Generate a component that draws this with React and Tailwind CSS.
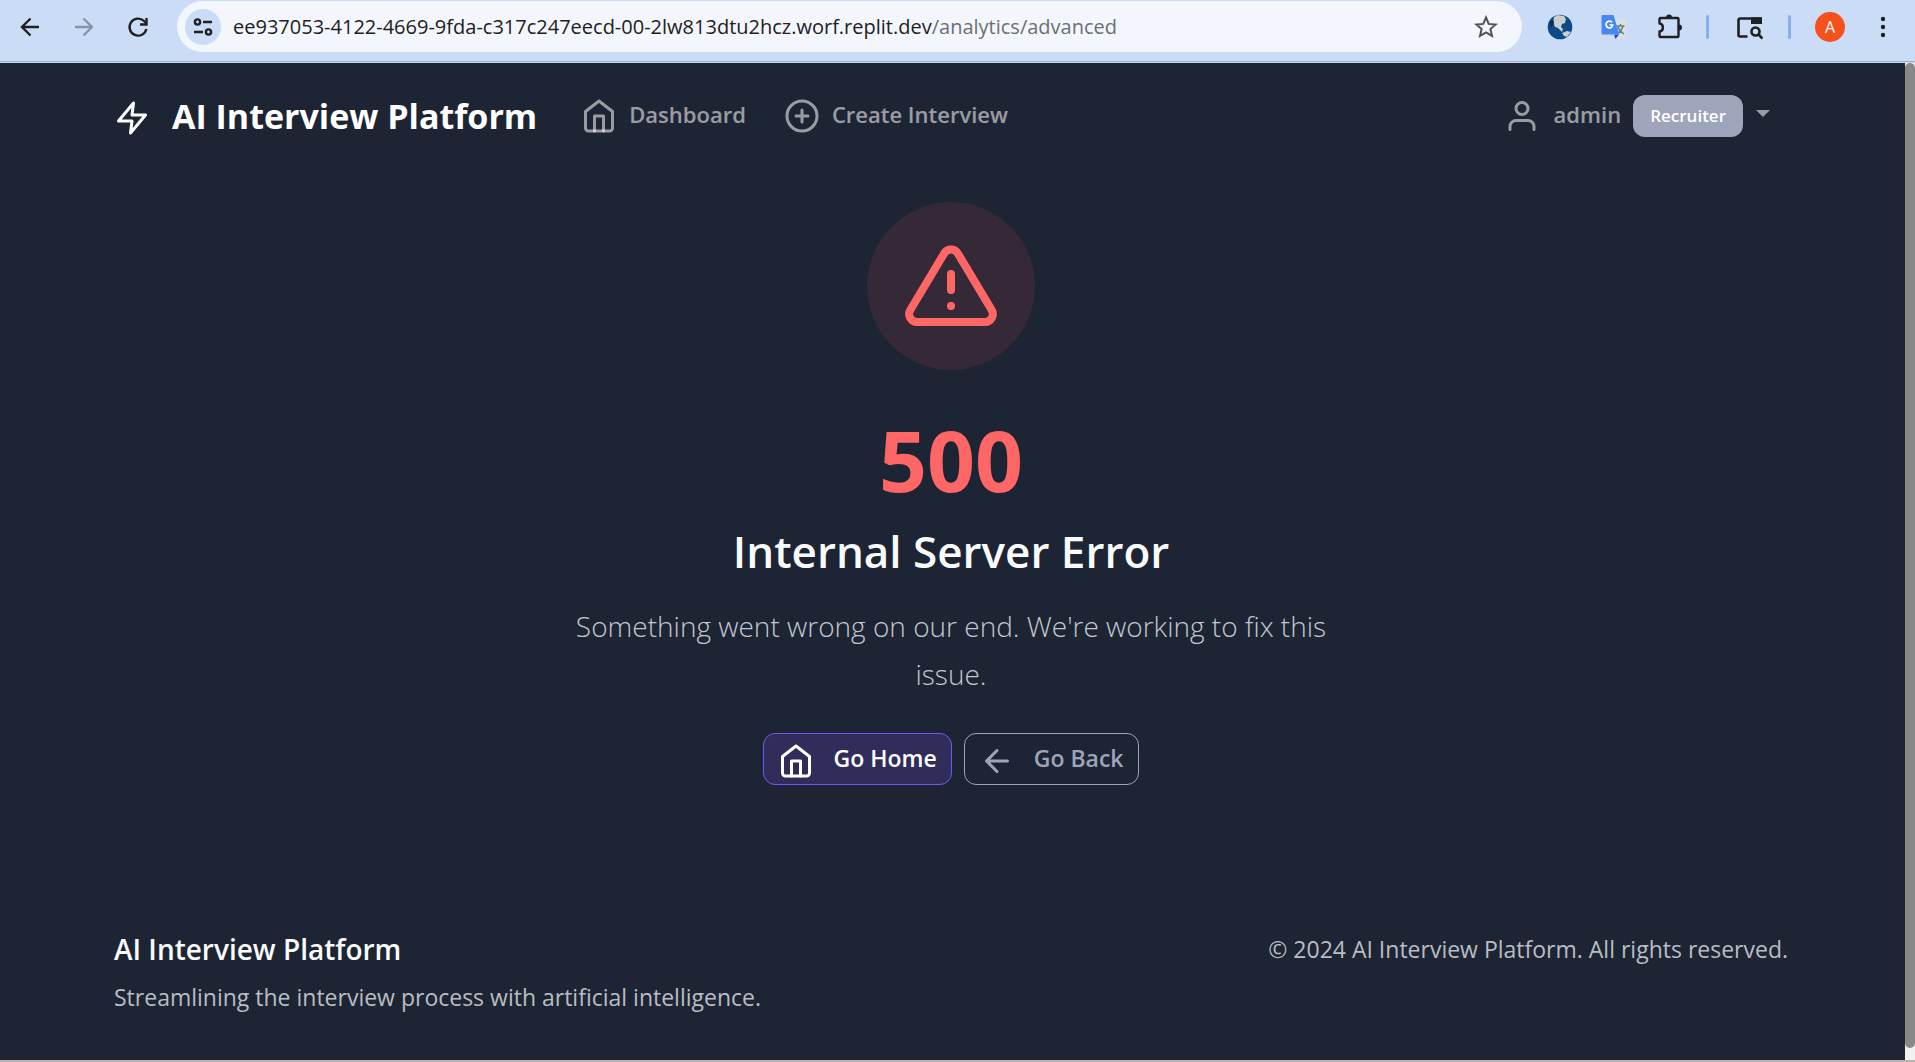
import React from "react";

function Feather({ className = "size-9 shrink-0", children }) {
  return (
    <svg
      className={className}
      viewBox="0 0 24 24"
      fill="none"
      stroke="currentColor"
      strokeWidth="2"
      strokeLinecap="round"
      strokeLinejoin="round"
      aria-hidden="true"
    >
      {children}
    </svg>
  );
}

function HomeIcon({ className = "size-9 shrink-0" }) {
  return (
    <Feather className={className}>
      <path d="M3 9l9-7 9 7v11a2 2 0 0 1-2 2H5a2 2 0 0 1-2-2z" />
      <polyline points="9 22 9 12 15 12 15 22" />
    </Feather>
  );
}

function ToolButton({ label, className = "", children }) {
  return (
    <button type="button" aria-label={label} className={`flex size-9 shrink-0 items-center justify-center ${className}`}>
      {children}
    </button>
  );
}

function BrowserBar() {
  return (
    <header className="flex h-[63px] shrink-0 items-start border-b border-[#c9d9f2] bg-[#cbdcf6] pt-px text-[#1f2023] shadow-[inset_0_-1px_0_#9db0d2]">
      <div className="flex h-[51px] items-center gap-[18px] pl-3">
        <ToolButton label="Back">
          <svg className="size-6" viewBox="0 0 24 24" fill="none" stroke="currentColor" strokeWidth="2.4">
            <path d="M21 12H4.500M12.500 3.500L4 12l8.500 8.500" />
          </svg>
        </ToolButton>
        <ToolButton label="Forward" className="text-[#8a94a8]">
          <svg className="size-6" viewBox="0 0 24 24" fill="none" stroke="currentColor" strokeWidth="2.4">
            <path d="M3 12h16.500M11.500 3.500L20 12l-8.500 8.500" />
          </svg>
        </ToolButton>
        <ToolButton label="Reload">
          <svg className="size-6" viewBox="0 0 24 24" fill="none" stroke="currentColor" strokeWidth="2.4">
            <path d="M20.400 14A8.500 8.500 0 1 1 18 6l2.500 2.500" />
            <path d="M20.500 3v6.500H14" />
          </svg>
        </ToolButton>
      </div>
      <div className="ml-[21px] flex h-[51px] min-w-0 flex-1 items-center rounded-full bg-[#f3f7fd] pl-2 pr-[18px]">
        <button
          type="button"
          aria-label="View site information"
          className="flex size-9 shrink-0 items-center justify-center rounded-full bg-[#cbdcf6]"
        >
          <svg className="size-6" viewBox="0 0 24 24" fill="none" stroke="currentColor" strokeWidth="2.4">
            <circle cx="6.500" cy="7" r="2.600" />
            <path d="M12 7h9M3 17h9" />
            <circle cx="17.500" cy="17" r="2.600" />
          </svg>
        </button>
        <p className="ml-3 flex-1 truncate text-xl leading-8">
          ee937053-4122-4669-9fda-c317c247eecd-00-2lw813dtu2hcz.worf.replit.dev
          <span className="text-[#6c6f75]">/analytics/advanced</span>
        </p>
        <ToolButton label="Bookmark this page" className="text-[#505358]">
          <svg className="size-6" viewBox="0 0 24 24" fill="none" stroke="currentColor" strokeWidth="2">
            <path d="M12 2.500l2.700 6.400 6.900.6-5.200 4.600 1.600 6.800L12 17.300l-6 3.600 1.600-6.800-5.200-4.600 6.900-.6z" />
          </svg>
        </ToolButton>
      </div>
      <div className="flex h-[51px] shrink-0 items-center pl-5 pr-[14px]">
        <ToolButton label="Globe extension">
          <svg className="size-[26px]" viewBox="0 0 26 26">
            <circle cx="13" cy="13" r="12.300" fill="#0b4a86" />
            <path d="M7 3l4-2 6 1 2 3-1 4-3 1-1 3 2 2-1 3-4-4-3-1-2-5z" fill="#c9cdd1" />
            <path d="M15 19l5-2 4 1-4 5-3-1z" fill="#c9cdd1" />
            <path d="M3 8l3-3 1 4-3 5z" fill="#0a2f57" />
          </svg>
        </ToolButton>
        <ToolButton label="Google Translate" className="ml-[18px]">
          <svg className="size-[26px]" viewBox="0 0 26 26">
            <path d="M10 5h14a1 1 0 0 1 1 1v18a1 1 0 0 1-1 1h-9z" fill="#dde0e3" />
            <path d="M15.500 12h8M19.500 10v2M22 12c-1 4-3 6-6 8M17 13c1 3 3 5 6 7" stroke="#5f7f8c" strokeWidth="1.400" fill="none" />
            <path d="M13 20.500h5L14.500 25z" fill="#3740b5" />
            <path d="M1 1h11.500l6 19.500H2A1.500 1.500 0 0 1 .5 19V2A1 1 0 0 1 1 1z" fill="#4688f1" />
            <path d="M11 8.300A3.400 3.400 0 1 0 11.800 11H8.500" stroke="#fff" strokeWidth="1.700" fill="none" />
          </svg>
        </ToolButton>
        <ToolButton label="Extensions" className="ml-5">
          <svg className="size-[26px]" viewBox="0 0 26 26" fill="none" stroke="currentColor" strokeWidth="2.400" strokeLinejoin="round">
            <path d="M3.500 4h17a1 1 0 0 1 1 1v17a1 1 0 0 1-1 1h-17a1 1 0 0 1-1-1v-4.500c4.500-.5 4.500-7.500 0-8V5a1 1 0 0 1 1-1z" />
            <path d="M9 3.500a3 3 0 0 1 6 0zM22 10.500a3 3 0 0 1 0 6z" fill="currentColor" stroke="none" />
          </svg>
        </ToolButton>
        <span className="ml-[18px] h-6 w-[3px] rounded-full bg-[#86b0ef]" />
        <ToolButton label="Search tabs" className="ml-[23px]">
          <svg className="size-[26px]" viewBox="0 0 26 26" fill="none" stroke="currentColor" strokeWidth="2.600">
            <path d="M10.500 22.500H3a1.500 1.500 0 0 1-1.500-1.500V6A1.500 1.500 0 0 1 3 4.500h20.500V9" />
            <path d="M14 3.500h11V10H14z" fill="currentColor" stroke="none" />
            <circle cx="18.500" cy="17.500" r="4" />
            <path d="M21.500 20.500l4 4" />
          </svg>
        </ToolButton>
        <span className="ml-5 h-6 w-[3px] rounded-full bg-[#86b0ef]" />
        <button
          type="button"
          aria-label="Profile"
          className="ml-6 flex size-[30px] shrink-0 items-center justify-center rounded-full bg-[#f6511d] text-base text-white"
        >
          A
        </button>
        <ToolButton label="Menu" className="ml-5">
          <svg className="size-6" viewBox="0 0 24 24" fill="currentColor">
            <circle cx="12" cy="4" r="2.200" />
            <circle cx="12" cy="12" r="2.200" />
            <circle cx="12" cy="20" r="2.200" />
          </svg>
        </ToolButton>
      </div>
    </header>
  );
}

function NavBar() {
  return (
    <nav className="flex h-[109px] items-center pb-[3px] text-[22px] font-semibold text-white/55">
      <a href="#" className="flex items-center gap-[22px] pt-1 text-white">
        <Feather>
          <polygon points="13 2 3 14 12 14 11 22 21 10 12 10 13 2" />
        </Feather>
        <span className="pb-1 text-[34px] font-bold leading-12">AI Interview Platform</span>
      </a>
      <a href="#" className="ml-11 flex items-center gap-3">
        <HomeIcon />
        <span className="pb-1">Dashboard</span>
      </a>
      <a href="#" className="ml-[38px] flex items-center gap-3">
        <Feather>
          <circle cx="12" cy="12" r="10" />
          <path d="M12 8v8M8 12h8" />
        </Feather>
        <span className="pb-1">Create Interview</span>
      </a>
      <button type="button" className="ml-auto mr-[17px] flex items-center">
        <Feather>
          <path d="M20 21v-2a4 4 0 0 0-4-4H8a4 4 0 0 0-4 4v2" />
          <circle cx="12" cy="7" r="4" />
        </Feather>
        <span className="ml-[14px] pb-1">admin</span>
        <span className="ml-3 flex h-[42px] items-center rounded-xl bg-[#9ea5ba] px-[17px] text-[17px] font-semibold text-white">
          Recruiter
        </span>
        <svg className="ml-3 mb-1 h-2 w-4" viewBox="0 0 16 8" fill="currentColor" aria-hidden="true">
          <path d="M1 0h14L8 7z" />
        </svg>
      </button>
    </nav>
  );
}

function ErrorPanel() {
  return (
    <main className="mx-auto flex w-full max-w-[790px] flex-col items-center pt-[30px] text-center">
      <div className="flex size-[168px] items-center justify-center rounded-full bg-[#352937] text-[#ff6666]">
        <Feather className="size-24">
          <path d="M10.290 3.860L1.820 18a2 2 0 0 0 1.710 3h16.940a2 2 0 0 0 1.710-3L13.710 3.860a2 2 0 0 0-3.420 0z" />
          <path d="M12 9v4M12 17h.01" />
        </Feather>
      </div>
      <h1 className="mt-10 text-[84px] font-bold leading-[100px] text-[#ff6666]">500</h1>
      <h2 className="mt-3 text-[44px] font-semibold leading-[58px] text-[#f8fafc]">Internal Server Error</h2>
      <p className="mt-[22px] text-[28px] font-light leading-12 text-[#c3c8d0]">
        Something went wrong on our end. We're working to fix this issue.
      </p>
      <div className="mt-[35px] flex gap-3 text-[23px] font-semibold">
        <button
          type="button"
          className="flex h-[52px] items-center gap-[19px] rounded-xl border border-[#7357f0] bg-[#302d5b] px-[14px] pb-px text-white"
        >
          <HomeIcon className="mt-1 size-9 shrink-0" />
          Go Home
        </button>
        <button
          type="button"
          className="flex h-[52px] items-center gap-[19px] rounded-xl border border-[#9ea5ba] px-[14px] pb-px text-[#9ea5ba]"
        >
          <Feather className="mt-1 size-9 shrink-0">
            <path d="M19 12H5M12 19l-7-7 7-7" />
          </Feather>
          Go Back
        </button>
      </div>
    </main>
  );
}

function Footer() {
  return (
    <footer className="mt-auto flex items-start justify-between pb-[45px] text-[23px] leading-9 text-[#b9bdc4]">
      <div>
        <h5 className="text-[28px] font-semibold text-[#f8fafc]">AI Interview Platform</h5>
        <p className="mt-3">Streamlining the interview process with artificial intelligence.</p>
      </div>
      <p>© 2024 AI Interview Platform. All rights reserved.</p>
    </footer>
  );
}

export default function App() {
  return (
    <div className="flex min-h-screen flex-col border-b-2 border-[#bcb3a8] bg-[#1d2433] font-['Open_Sans','Noto_Sans',sans-serif]">
      <BrowserBar />
      <div className="flex flex-1">
        <div className="flex min-w-0 flex-1 flex-col pl-[114px] pr-[117px]">
          <NavBar />
          <ErrorPanel />
          <Footer />
        </div>
        <div className="flex w-[10px] shrink-0 flex-col bg-[#f1f1f1] pb-3">
          <div className="flex-1 rounded-full bg-[#888888]" />
        </div>
      </div>
    </div>
  );
}
